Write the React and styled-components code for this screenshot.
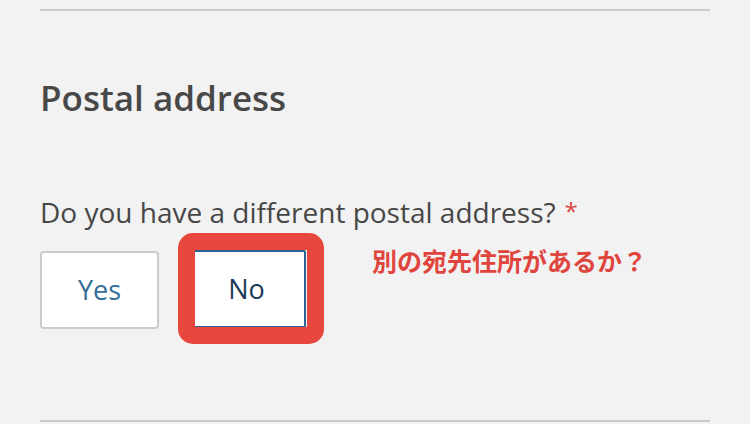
import React, { useState } from 'react';
import styled, { createGlobalStyle } from 'styled-components';

const GlobalStyle = createGlobalStyle`
	html, body {
		margin: 0;
		padding: 0;
		background: #f2f2f2;
	}
	body {
		font-family: 'Open Sans', 'Noto Sans', sans-serif;
	}
`;

const StyledPage = styled.div`
	width: 750px;
	height: 424px;
	padding: 0 40px;
	box-sizing: border-box;
	overflow: hidden;
	background: #f2f2f2;
`;

const StyledRule = styled.hr`
	margin: ${props => props.top}px 0 0 0;
	border: none;
	height: 2px;
	background: #cbcbcb;
`;

const StyledHeading = styled.h2`
	margin: 66px 0 0 0;
	font-size: 35px;
	line-height: 42px;
	font-weight: 600;
	color: #484848;
`;

const StyledLabel = styled.p`
	margin: 74px 0 0 0;
	font-size: 28px;
	line-height: 36px;
	color: #474747;
`;

const StyledRequired = styled.span`
	color: #d9463e;
	margin-left: 9px;
	font-size: 24px;
	vertical-align: 3px;
`;

const StyledRow = styled.div`
	display: flex;
	align-items: flex-start;
	gap: 28px;
	margin-top: 21px;
`;

const StyledChoice = styled.button`
	width: 119px;
	height: 78px;
	box-sizing: border-box;
	background: #fff;
	border: 2px solid ${props => (props.selected ? '#2f6393' : '#cccccc')};
	border-radius: ${props => (props.selected ? '2px' : '4px')};
	font-family: 'Open Sans', sans-serif;
	font-size: 27px;
	color: ${props => (props.selected ? '#1c3a58' : '#336e9b')};
	cursor: pointer;
	padding: 0 0 2px 0;
`;

const StyledMarked = styled.div`
	position: relative;
	margin-top: -1px;
`;

const StyledRing = styled.span`
	position: absolute;
	left: -9px;
	top: -17px;
	right: -18px;
	bottom: -16px;
	border: 17px solid #e8473e;
	border-radius: 15px;
	pointer-events: none;
`;

const StyledNote = styled.p`
	margin: -3px 0 0 38px;
	font-family: 'Noto Sans CJK JP', sans-serif;
	font-weight: 700;
	font-size: 25px;
	line-height: 25px;
	color: #e0453d;
`;

const App = () => {
	const [answer, setAnswer] = useState('no');

	return (
		<>
			<GlobalStyle />
			<StyledPage>
				<StyledRule top={9} />
				<StyledHeading>Postal address</StyledHeading>
				<StyledLabel>
					Do you have a different postal address?
					<StyledRequired>*</StyledRequired>
				</StyledLabel>
				<StyledRow>
					<StyledChoice selected={answer === 'yes'} onClick={() => setAnswer('yes')}>
						Yes
					</StyledChoice>
					<StyledMarked>
						<StyledChoice selected={answer === 'no'} onClick={() => setAnswer('no')}>
							No
						</StyledChoice>
						<StyledRing />
					</StyledMarked>
					<StyledNote>別の宛先住所があるか？</StyledNote>
				</StyledRow>
				<StyledRule top={91} />
			</StyledPage>
		</>
	);
};

export default App;
